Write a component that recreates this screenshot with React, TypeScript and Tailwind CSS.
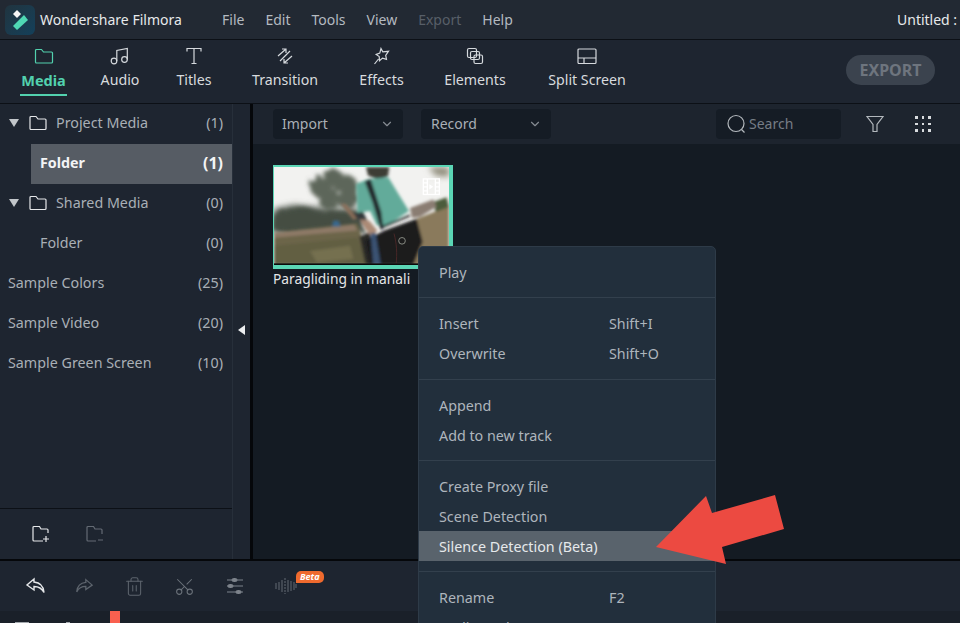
import { ChevronDown, Scissors, Trash2 } from 'lucide-react'

const tabs = [
  { label: 'Media', box: 'ml-[20px] w-[47px]', icon: <FolderTab /> },
  { label: 'Audio', box: 'ml-[34px] w-[38px]', icon: <AudioIcon /> },
  { label: 'Titles', box: 'ml-[37px] w-[36px]', icon: <TitlesIcon /> },
  { label: 'Transition', box: 'ml-[40px] w-[66px]', icon: <TransitionIcon /> },
  { label: 'Effects', box: 'ml-[41px] w-[45px]', icon: <EffectsIcon /> },
  { label: 'Elements', box: 'ml-[41px] w-[60px]', icon: <ElementsIcon /> },
  { label: 'Split Screen', box: 'ml-[43px] w-[78px]', icon: <SplitIcon /> },
]

const menuGroups = [
  [{ label: 'Play' }],
  [
    { label: 'Insert', key: 'Shift+I' },
    { label: 'Overwrite', key: 'Shift+O' },
  ],
  [{ label: 'Append' }, { label: 'Add to new track' }],
  [
    { label: 'Create Proxy file' },
    { label: 'Scene Detection' },
    { label: 'Silence Detection (Beta)', active: true },
  ],
  [{ label: 'Rename', key: 'F2' }, { label: 'Audio Tools', more: true }],
]

function FolderTab() {
  return (
    <svg width="20" height="18" viewBox="0 0 20 18" fill="none" stroke="#52d1ae" strokeWidth="1.2">
      <path d="M1.5 3.5a1 1 0 0 1 1-1h5l2 2.5h8a1 1 0 0 1 1 1v9a1 1 0 0 1-1 1h-15a1 1 0 0 1-1-1z" />
    </svg>
  )
}

function AudioIcon() {
  return (
    <svg width="20" height="18" viewBox="0 0 20 18" fill="none" stroke="#d5d9dd" strokeWidth="1.2">
      <circle cx="4" cy="14" r="2.8" />
      <circle cx="14.5" cy="12.5" r="2.8" />
      <path d="M6.8 14V3.5L17.3 1.5v11" />
    </svg>
  )
}

function TitlesIcon() {
  return (
    <svg width="18" height="18" viewBox="0 0 18 18" fill="none" stroke="#d5d9dd" strokeWidth="1.2">
      <path d="M2 4.5V1.5h14v3M9 1.5v15M6.5 16.5h5" />
    </svg>
  )
}

function TransitionIcon() {
  return (
    <svg width="18" height="18" viewBox="0 0 18 18" fill="none" stroke="#d5d9dd" strokeWidth="1.2">
      <path d="M2 9l8-7M6 2h4v4M16 9l-8 7M12 16H8v-4M14 4L4 14" />
    </svg>
  )
}

function EffectsIcon() {
  return (
    <svg width="18" height="18" viewBox="0 0 18 18" fill="none" stroke="#d5d9dd" strokeWidth="1.2">
      <path d="M8 1.5l1.8 3.3 5.7-.5-2.8 4 .8 4-4-1.2-3 2.6-.3-4.2-3-2 3.6-1.4zM5.5 12L1.5 17" />
    </svg>
  )
}

function ElementsIcon() {
  return (
    <svg width="18" height="18" viewBox="0 0 18 18" fill="none" stroke="#d5d9dd" strokeWidth="1.2">
      <rect x="1.5" y="1.5" width="9" height="9" rx="1.5" />
      <rect x="4.5" y="4.5" width="9" height="8" rx="1.5" />
      <rect x="8" y="8" width="8.5" height="8.5" rx="1.5" />
    </svg>
  )
}

function SplitIcon() {
  return (
    <svg width="20" height="17" viewBox="0 0 20 17" fill="none" stroke="#d5d9dd" strokeWidth="1.2">
      <rect x="1" y="1" width="18" height="14.5" rx="1" />
      <path d="M1 10h18M7 10v5.5" />
    </svg>
  )
}

function SmallFolder() {
  return (
    <svg width="18" height="16" viewBox="0 0 18 16" fill="none" stroke="#e6e8ea" strokeWidth="1.2">
      <path d="M1 2.5a1 1 0 0 1 1-1h5l2 2.5h7a1 1 0 0 1 1 1v8.5a1 1 0 0 1-1 1H2a1 1 0 0 1-1-1z" />
    </svg>
  )
}

function Logo() {
  return (
    <div className="flex h-[30px] w-[30px] items-center justify-center rounded-[6px] bg-gradient-to-br from-[#20343f] to-[#13405a]">
      <svg width="30" height="30" viewBox="5 5 30 30">
        <path d="M13 14l4-4 4 4-4 4z" fill="#f6f6f6" />
        <path d="M13 26l11-11 4 5-11 10z" fill="#4fd8b4" />
      </svg>
    </div>
  )
}

// Blurred drawing of the clip's first frame, in zoomed-crop coordinates.
function Thumbnail() {
  return (
    <svg className="block h-[98px] w-[175px]" viewBox="12 14 525 296" preserveAspectRatio="none">
      <defs>
        <filter id="leafy" x="-20%" y="-20%" width="140%" height="140%">
          <feTurbulence type="fractalNoise" baseFrequency="0.04" numOctaves="3" seed="4" />
          <feDisplacementMap in="SourceGraphic" scale="30" />
          <feGaussianBlur stdDeviation="6" />
        </filter>
        <filter id="soft" x="-10%" y="-10%" width="120%" height="120%">
          <feGaussianBlur stdDeviation="5" />
        </filter>
        <filter id="softer" x="-20%" y="-20%" width="140%" height="140%">
          <feGaussianBlur stdDeviation="10" />
        </filter>
      </defs>
      <rect x="12" y="14" width="525" height="296" fill="#f2f2f0" />
      <g filter="url(#softer)">
        <path d="M12 140l60-12 60 6 140 10v70H12z" fill="#5c635a" />
        <path d="M475 14h62v30l-40-4z" fill="#8d8a78" />
      </g>
      <g filter="url(#leafy)" fill="#5d665a">
        <circle cx="150" cy="75" r="30" />
        <circle cx="190" cy="52" r="32" />
        <circle cx="232" cy="68" r="30" />
        <circle cx="175" cy="110" r="32" />
        <circle cx="232" cy="110" r="32" />
        <path d="M12 155l70-20 70 14 110 0 20 60H12z" fill="#454d42" />
      </g>
      <g filter="url(#soft)">
        <path d="M12 212l120-14 130-14 40 126H12z" fill="#6c6549" />
        <path d="M12 214l120-12 120-14 10 18-130 10-120 12z" fill="#8f7a68" />
        <path d="M12 252l250-25 30 83H12z" fill="#625f42" />
        <path d="M120 268l120-16 10 40-110 10z" fill="#74704f" />
        <path d="M440 170l97-38v178H410z" fill="#8a7a5b" />
        <path d="M490 120l40-15 7 30-40 15z" fill="#4c5c3a" />
        <path d="M190 176h16l6 18h-26z" fill="#37688e" />
        <path d="M268 225l30-15 25 100h-36z" fill="#2b2a28" />
        <path d="M285 235l60-30 95-35 18 70-28 70H300z" fill="#1c1a1e" />
        <path d="M288 14h70l-4 28-30 10-30-12z" fill="#3c3c36" />
        <path d="M258 65l35-14 62-6 30 50 32 52-72 48-25-6-20-42-38 6z" fill="#62ab9a" />
        <path d="M284 58l18-8 32 100 6 50-8 4-24-82z" fill="#22282a" />
        <path d="M420 138l70-26 10 22-50 30-24 4z" fill="#8a7d72" />
        <path d="M212 124l16 2 34 42-12 6z" fill="#8a6d58" />
        <path d="M250 155l28-6 22 42-14 8z" fill="#33373a" />
        <path d="M270 172l28 4 24 30-16 18-20-22z" fill="#ab8a76" />
        <path d="M335 196l85-36" stroke="#15181a" strokeWidth="6" fill="none" />
        <path d="M302 215l14-3 16 98h-22z" fill="#3a5273" />
      </g>
      <circle cx="396" cy="237" r="10" fill="none" stroke="#858880" strokeWidth="3" />
      <path d="M372 215c8 30 10 60 6 95" stroke="#5e2c2c" strokeWidth="2" fill="none" />
      <rect x="12" y="305" width="525" height="5" fill="#0b0b0b" />
      <g fill="none" stroke="#ffffff" strokeWidth="4">
        <rect x="460" y="50" width="48" height="47" />
        <path d="M472 50v47M496 50v47M460 62h12M460 74h12M460 86h12M496 62h12M496 74h12M496 86h12" />
      </g>
      <path d="M478 66l12 8-12 8z" fill="#ffffff" />
    </svg>
  )
}

function SideRow({
  label,
  count,
  kind,
}: {
  label: string
  count: string
  kind?: 'tree' | 'sub' | 'active'
}) {
  if (kind === 'active') {
    return (
      <div className="ml-[31px] flex h-10 w-[201px] items-center justify-between bg-[#565c64] pb-[3px] pl-[9px] pr-[9px] font-bold text-[#f3f4f5]">
        <span>{label}</span>
        <span className="text-[16px]">{count}</span>
      </div>
    )
  }
  return (
    <div
      className={
        'flex h-10 items-center justify-between pb-[3px] pr-[9px] text-[#a9afb6] ' +
        (kind === 'sub' ? 'pl-10' : 'pl-[8px]')
      }
    >
      <span className="flex items-center">
        {kind === 'tree' && (
          <>
            <span className="mr-[10px] ml-[1px] h-0 w-0 border-x-[5px] border-t-[8px] border-x-transparent border-t-[#c2c6ca]" />
            <span className="mr-[9px] flex">
              <SmallFolder />
            </span>
          </>
        )}
        {label}
      </span>
      <span>{count}</span>
    </div>
  )
}

function ContextMenu() {
  return (
    <div className="absolute left-[418px] top-[246px] h-[400px] w-[298px] rounded-[5px] border border-[#2e3b48] bg-[#222f3c] text-[14.3px] text-[#aeb5bc]">
      {menuGroups.map((group, i) => (
        <div
          key={i}
          className={
            'border-[#33404d] pt-[10px] ' +
            (i === 1 ? 'pb-[11px] ' : 'pb-[10px] ') +
            (i < menuGroups.length - 1 ? 'border-b' : '')
          }
        >
          {group.map((item) => (
            <div
              key={item.label}
              className={
                'flex h-[30px] items-center pl-5 pt-[1px] ' +
                ('active' in item ? 'bg-[#59636c] text-[#e6e9eb]' : '')
              }
            >
              <span className="w-[170px]">{item.label}</span>
              {'key' in item && <span>{item.key}</span>}
              {'more' in item && (
                <span className="ml-auto mr-[16px] h-0 w-0 border-y-[5px] border-l-[6px] border-y-transparent border-l-[#aeb5bc]" />
              )}
            </div>
          ))}
        </div>
      ))}
    </div>
  )
}

export default function App() {
  return (
    <div className="relative flex h-[623px] w-[960px] flex-col overflow-hidden bg-[#1d242e] font-['Noto_Sans',sans-serif] text-[14px] leading-5">
      {/* title bar */}
      <div className="flex h-10 shrink-0 items-center border-b border-[#0c1016] bg-[#222933]">
        <div className="ml-[5px] mr-[5px]">
          <Logo />
        </div>
        <span className="w-[182px] whitespace-nowrap text-[14px] text-[#e7e9eb]">Wondershare Filmora</span>
        <nav className="flex gap-[21px] text-[#b4bac0]">
          <span>File</span>
          <span>Edit</span>
          <span>Tools</span>
          <span>View</span>
          <span className="text-[#585f68]">Export</span>
          <span>Help</span>
        </nav>
        <span className="ml-auto w-[63px] whitespace-nowrap text-[#e7e9eb]">Untitled :</span>
      </div>

      {/* module tabs */}
      <div className="relative flex h-[64px] shrink-0 items-start border-b border-[#0c1016] bg-[#1e2530]">
        {tabs.map((t, i) => (
          <div key={t.label} className={'flex flex-col items-center pt-[7px] ' + t.box}>
            <span className="flex h-[18px] items-center">{t.icon}</span>
            <span
              className={
                'mt-[5px] whitespace-nowrap ' +
                (i === 0 ? 'text-[14.5px] font-bold text-[#52d1ae]' : 'text-[14.2px] text-[#d8dbde]')
              }
            >
              {t.label}
            </span>
            {i === 0 && <span className="mt-[4px] h-[2px] w-[47px] bg-[#52d1ae]" />}
          </div>
        ))}
        <button className="ml-auto mr-[25px] mt-[15px] h-[30px] w-[89px] rounded-[15px] bg-[#3b434e] text-[16px] font-bold text-[#6e757e]">
          EXPORT
        </button>
      </div>

      {/* library */}
      <div className="flex min-h-0 flex-1">
        <aside className="flex w-[233px] shrink-0 flex-col border-r border-[#272f3a] bg-[#1e2530] text-[14.3px]">
          <SideRow label="Project Media" count="(1)" kind="tree" />
          <SideRow label="Folder" count="(1)" kind="active" />
          <SideRow label="Shared Media" count="(0)" kind="tree" />
          <SideRow label="Folder" count="(0)" kind="sub" />
          <SideRow label="Sample Colors" count="(25)" />
          <SideRow label="Sample Video" count="(20)" />
          <SideRow label="Sample Green Screen" count="(10)" />
          <div className="mt-auto flex h-[51px] items-center gap-[36px] border-t border-[#0c1016] pl-[32px]">
            <svg width="18" height="18" viewBox="0 0 18 18" fill="none" stroke="#e6e8ea" strokeWidth="1.2">
              <path d="M16 8V5a1 1 0 0 0-1-1H9L7.5 1.5H2a1 1 0 0 0-1 1V15a1 1 0 0 0 1 1h9M14 11v6M11 14h6" />
            </svg>
            <svg width="18" height="18" viewBox="0 0 18 18" fill="none" stroke="#646b74" strokeWidth="1.2">
              <path d="M16 9V5a1 1 0 0 0-1-1H9L7.5 1.5H2a1 1 0 0 0-1 1V15a1 1 0 0 0 1 1h8M12 15h5" />
            </svg>
          </div>
        </aside>
        <div className="w-[17px] shrink-0 bg-[#1e2530]" />
        <div className="w-[3px] shrink-0 bg-[#05070a]" />

        <main className="flex min-w-0 flex-1 flex-col bg-[#141b23]">
          <div className="flex h-10 shrink-0 items-center bg-[#1d242e] pl-5 text-[#a9afb6]">
            <div className="flex h-[30px] w-[130px] items-center justify-between rounded-[4px] bg-[#151c25] pl-[9px] pr-[9px]">
              Import
              <ChevronDown size={14} className="text-[#858b92]" />
            </div>
            <div className="ml-[18px] flex h-[30px] w-[130px] items-center justify-between rounded-[4px] bg-[#151c25] pl-[10px] pr-[9px]">
              Record
              <ChevronDown size={14} className="text-[#858b92]" />
            </div>
            <div className="ml-[165px] flex h-[30px] w-[125px] items-center rounded-[4px] bg-[#151c25] pl-[10px] text-[#767d85]">
              <svg width="20" height="20" viewBox="0 0 20 20" fill="none" stroke="#b3b8bd" strokeWidth="1.2" className="mr-[3px]">
                <circle cx="10" cy="9.5" r="8" />
                <path d="M15.5 15.5l3 3" />
              </svg>
              Search
            </div>
            <svg width="18" height="18" viewBox="0 0 18 18" fill="none" stroke="#b3b8bd" strokeWidth="1.2" className="ml-[25px]">
              <path d="M1 1.5h16l-6 8v7h-4v-7z" />
            </svg>
            <div className="ml-[31px] grid grid-cols-3 gap-x-[4px] gap-y-[4px]">
              {Array.from({ length: 9 }).map((_, i) => (
                <span key={i} className="h-[2.5px] w-[2.5px] bg-[#d8dbde]" />
              ))}
            </div>
          </div>
          <div className="pl-5 pt-[21px]">
            <div className="h-[104px] w-[180px] bg-[#5bd6b5] pb-[3px] pl-[1px] pr-[4px] pt-[2px]">
              <Thumbnail />
            </div>
            <div className="text-[13.8px] text-[#e4e6e8]">Paragliding in manali</div>
          </div>
        </main>
      </div>

      {/* edit toolbar */}
      <div className="flex h-[52px] shrink-0 items-center border-t-2 border-[#05070a] bg-[#1e2530] pl-[25px]">
        <svg width="22" height="18" viewBox="0 0 22 18" fill="none" stroke="#e6e8ea" strokeWidth="1.4">
          <path d="M9 2L2 8l7 5V9.5c5 0 8 2 10 6-.5-6-4-10-10-10.5z" />
        </svg>
        <svg width="20" height="18" viewBox="0 0 22 18" fill="none" stroke="#5d646d" strokeWidth="1.4" className="ml-[27px]">
          <path d="M13 2l7 6-7 5V9.5c-5 0-8 2-10 6 .5-6 4-10 10-10.5z" />
        </svg>
        <Trash2 size={21} strokeWidth={1.2} className="ml-[30px] text-[#5d646d]" />
        <Scissors size={21} strokeWidth={1.2} className="ml-[29px] rotate-[-90deg] text-[#6b727a]" />
        <svg width="18" height="18" viewBox="0 0 18 18" fill="#7d838b" stroke="#7d838b" className="ml-[31px]">
          <path d="M1 3h16M1 9h16M1 15h16" strokeWidth="1.2" />
          <rect x="6" y="1.5" width="5" height="3" rx="1.5" />
          <rect x="2" y="7.5" width="5" height="3" rx="1.5" />
          <rect x="10" y="13.5" width="5" height="3" rx="1.5" />
        </svg>
        <div className="relative ml-[31px]">
          <svg width="22" height="18" viewBox="0 0 22 18" fill="none" stroke="#5d646d" strokeWidth="1.1" className="block">
            <path d="M1 6v6M4 5v8M7 3v12M13 3v12M16 4v10M19 5v8M21 7v4" />
            <path d="M10 1v16" strokeDasharray="2 1" />
          </svg>
          <span className="absolute left-[21px] top-[-6px] rounded-[5px] rounded-bl-none bg-[#ef6a2e] px-[4px] text-[9px] font-bold italic leading-[12px] text-white">
            Beta
          </span>
        </div>
      </div>

      {/* timeline strip */}
      <div className="relative h-[12px] shrink-0 bg-[#1a2029]">
        <span className="absolute left-[15px] top-[11px] h-[1px] w-[14px] bg-[#a3a8ad]" />
        <span className="absolute left-[66px] top-[11px] h-[1px] w-[4px] bg-[#a3a8ad]" />
        <span className="absolute left-[110px] top-0 h-[12px] w-[10px] bg-[#f9604f]" />
      </div>

      <span className="absolute left-[238px] top-[325px] h-0 w-0 border-y-[5px] border-r-[7px] border-y-transparent border-r-[#eceef0]" />

      <ContextMenu />

      {/* callout arrow */}
      <svg className="pointer-events-none absolute inset-0" width="960" height="623">
        <path
          d="M656 547L706 496L712 513L775 495L784 529L722 547L726 564Z"
          fill="#ec4a41"
        />
      </svg>
    </div>
  )
}
